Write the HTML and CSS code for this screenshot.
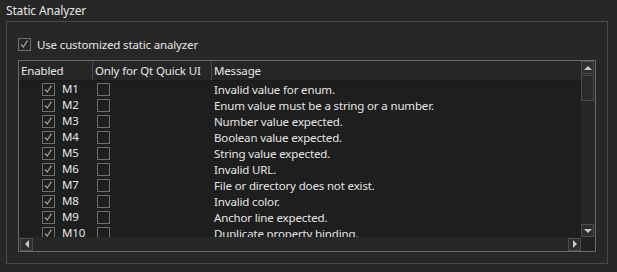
FILE: index.html
```html
<!DOCTYPE html>
<html>
<head>
<meta charset="utf-8">
<link rel="stylesheet" href="styles.css">
</head>
<body>
<div class="title">Static Analyzer</div>
<div class="group">
  <label class="main-check">
    <span class="cb checked"><svg viewBox="0 0 13 13"><polyline points="2.5,6.5 5,9.5 10,2"/></svg></span>
    <span>Use customized static analyzer</span>
  </label>
  <div class="table">
    <div class="viewport">
      <div class="head">
        <div class="hc c1">Enabled</div>
        <div class="hc c2">Only for Qt Quick UI</div>
        <div class="hc c3">Message</div>
      </div>
      <div class="rows" id="rows"></div>
    </div>
    <div class="vbar">
      <div class="btn up"><span class="tri-up"></span></div>
      <div class="thumb"></div>
      <div class="track"></div>
      <div class="btn down"><span class="tri-down"></span></div>
    </div>
    <div class="hbar">
      <div class="btn left"><span class="tri-left"></span></div>
      <div class="htrack"></div>
      <div class="btn right"><span class="tri-right"></span></div>
    </div>
    <div class="corner"></div>
  </div>
</div>
<script>
const msgs = ["Invalid value for enum.","Enum value must be a string or a number.","Number value expected.","Boolean value expected.","String value expected.","Invalid URL.","File or directory does not exist.","Invalid color.","Anchor line expected.","Duplicate property binding."];
const rows = document.getElementById('rows');
msgs.forEach((m,i)=>{
  const r = document.createElement('div');
  r.className='row';
  r.innerHTML = '<div class="c1 cell"><span class="cb checked"><svg viewBox="0 0 13 13"><polyline points="2.5,6.5 5,9.5 10,2"/></svg></span><span class="code">M'+(i+1)+'</span></div><div class="c2 cell"><span class="cb"></span></div><div class="c3 cell">'+m+'</div>';
  rows.appendChild(r);
});
</script>
</body>
</html>
```
FILE: styles.css
```css
html, body {
  margin: 0;
  padding: 0;
  background: #272727;
  color: #e6e6e6;
  font-family: "Noto Sans", "Open Sans", sans-serif;
  font-size: 11.5px;
  letter-spacing: -0.15px;
  width: 617px;
  height: 272px;
  overflow: hidden;
}
.title {
  height: 21px;
  line-height: 22px;
  padding-left: 6px;
  font-size: 12px;
}
.group {
  margin-left: 6px;
  border: 1px solid #4a4a4a;
  box-sizing: border-box;
  width: 602px;
  height: 243px;
  padding: 15px 11px 0 11px;
}
.main-check {
  display: flex;
  align-items: center;
  gap: 6px;
  height: 14px;
  margin-bottom: 9px;
}
.cb {
  display: inline-block;
  width: 13px;
  height: 13px;
  box-sizing: border-box;
  border: 1px solid #6e6e6e;
  flex: none;
}
.cb svg {
  display: block;
  width: 11px;
  height: 11px;
}
.cb polyline {
  fill: none;
  stroke: #a0a0a0;
  stroke-width: 1.5;
}
.table {
  width: 578px;
  height: 192px;
  box-sizing: border-box;
  border: 1px solid #6a6a6a;
  display: grid;
  grid-template-columns: 562px 14px;
  grid-template-rows: 176px 14px;
  background: #1e1e1e;
}
.viewport {
  overflow: hidden;
}
.head {
  display: grid;
  grid-template-columns: 74px 119px 1fr;
  height: 20px;
  background: #262626;
  border-bottom: 1px solid #1a1a1a;
  box-sizing: border-box;
}
.hc {
  line-height: 19px;
  padding-left: 2px;
  border-right: 1px solid #4a4a4a;
  white-space: nowrap;
  overflow: hidden;
}
.hc.c3 { border-right: none; }
.row {
  display: grid;
  grid-template-columns: 74px 119px 1fr;
  height: 16px;
}
.cell {
  display: flex;
  align-items: center;
  white-space: nowrap;
}
.row .c1 { padding-left: 23px; gap: 7px; }
.row .c2 { padding-left: 4px; }
.row .c3 { padding-left: 2px; }
.code { line-height: 16px; }
.vbar {
  background: #272727;
  display: flex;
  flex-direction: column;
}
.btn {
  width: 13px;
  height: 13px;
  box-sizing: border-box;
  border: 1px solid #4c4c4c;
  background: #2e2e2e;
  display: flex;
  align-items: center;
  justify-content: center;
  flex: none;
}
.thumb {
  width: 13px;
  height: 26px;
  box-sizing: border-box;
  border: 1px solid #4c4c4c;
  background: #2a2a2a;
  margin-top: 1px;
}
.track { flex: 1; }
.hbar {
  background: #272727;
  display: flex;
  align-items: center;
  padding-left: 1px;
}
.htrack { flex: 1; }
.corner { background: #222; }
.tri-up { width:0;height:0;border-left:4px solid transparent;border-right:4px solid transparent;border-bottom:4px solid #c8c8c8; }
.tri-down { width:0;height:0;border-left:4px solid transparent;border-right:4px solid transparent;border-top:4px solid #c8c8c8; }
.tri-left { width:0;height:0;border-top:4px solid transparent;border-bottom:4px solid transparent;border-right:4px solid #c8c8c8; }
.tri-right { width:0;height:0;border-top:4px solid transparent;border-bottom:4px solid transparent;border-left:4px solid #c8c8c8; }
```
